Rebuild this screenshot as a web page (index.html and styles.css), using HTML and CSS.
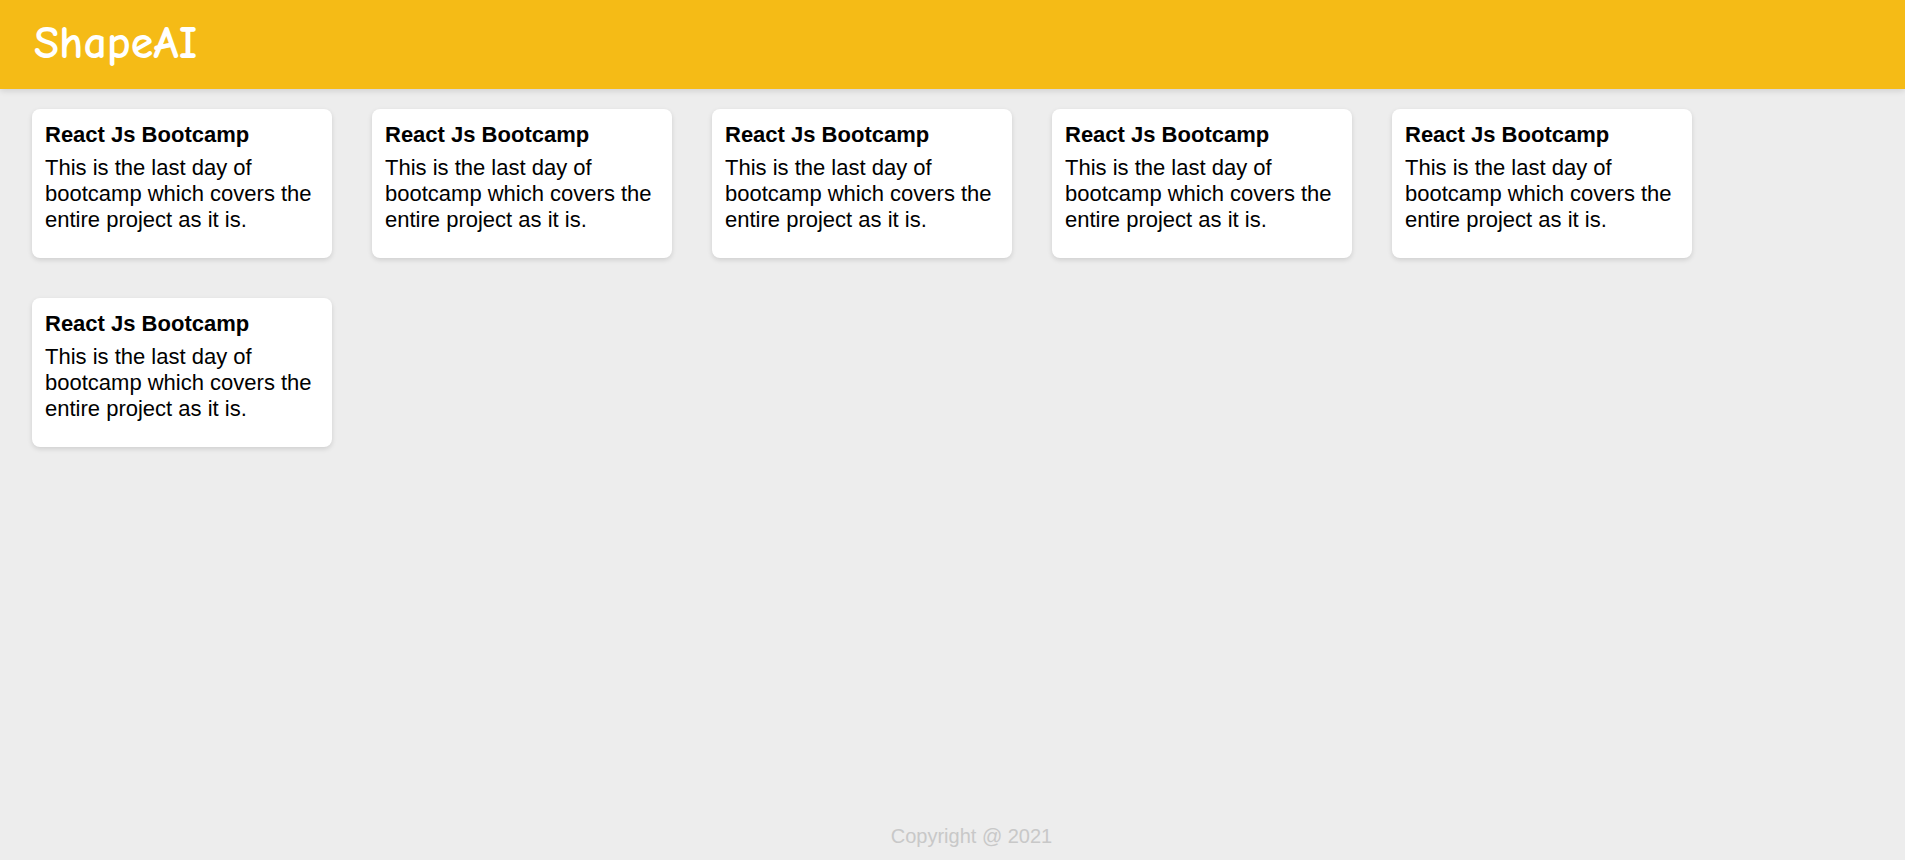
FILE: index.html
```html
<!DOCTYPE html>
<html>
<head>
<meta charset="utf-8">
<link rel="stylesheet" href="styles.css">
</head>
<body>
<header class="topbar"><h1 class="logo">ShapeAI</h1></header>
<main class="cards">
  <div class="card"><h3 class="card-title">React Js Bootcamp</h3><p class="card-text">This is the last day of bootcamp which covers the entire project as it is.</p></div>
  <div class="card"><h3 class="card-title">React Js Bootcamp</h3><p class="card-text">This is the last day of bootcamp which covers the entire project as it is.</p></div>
  <div class="card"><h3 class="card-title">React Js Bootcamp</h3><p class="card-text">This is the last day of bootcamp which covers the entire project as it is.</p></div>
  <div class="card"><h3 class="card-title">React Js Bootcamp</h3><p class="card-text">This is the last day of bootcamp which covers the entire project as it is.</p></div>
  <div class="card"><h3 class="card-title">React Js Bootcamp</h3><p class="card-text">This is the last day of bootcamp which covers the entire project as it is.</p></div>
  <div class="card"><h3 class="card-title">React Js Bootcamp</h3><p class="card-text">This is the last day of bootcamp which covers the entire project as it is.</p></div>
</main>
<footer class="footer">Copyright @ 2021</footer>
</body>
</html>
```

FILE: styles.css
```css
html, body {
  margin: 0;
  padding: 0;
  height: 100%;
}
body {
  background: #ededed;
  font-family: "Liberation Sans", Arial, sans-serif;
  color: #000;
  display: flex;
  flex-direction: column;
  overflow: hidden;
}
.topbar {
  height: 89px;
  background: #f5bb16;
  box-shadow: 0 2px 6px rgba(0,0,0,0.12);
  display: flex;
  align-items: center;
  padding-left: 34px;
  flex-shrink: 0;
}
.logo {
  margin: 0;
  color: #fff;
  font-family: "Comic Sans MS", "Comic Neue", cursive;
  font-weight: bold;
  font-size: 46px;
  line-height: 1;
  padding-bottom: 2px;
}
.cards {
  display: flex;
  flex-wrap: wrap;
  gap: 40px;
  padding: 20px 32px 0;
  align-content: flex-start;
  flex: 1;
}
.card {
  width: 300px;
  height: 149px;
  box-sizing: border-box;
  background: #fff;
  border-radius: 8px;
  box-shadow: 0 2px 5px rgba(0,0,0,0.13);
  padding: 13px 13px 0;
}
.card-title {
  margin: 0 0 8px;
  font-size: 22px;
  font-weight: bold;
  line-height: 25px;
}
.card-text {
  margin: 0;
  font-size: 22px;
  line-height: 25.8px;
}
.footer {
  flex-shrink: 0;
  text-align: center;
  color: #c8c8c8;
  font-size: 20px;
  padding: 0 0 12px 38px;
  line-height: 23px;
}
```
